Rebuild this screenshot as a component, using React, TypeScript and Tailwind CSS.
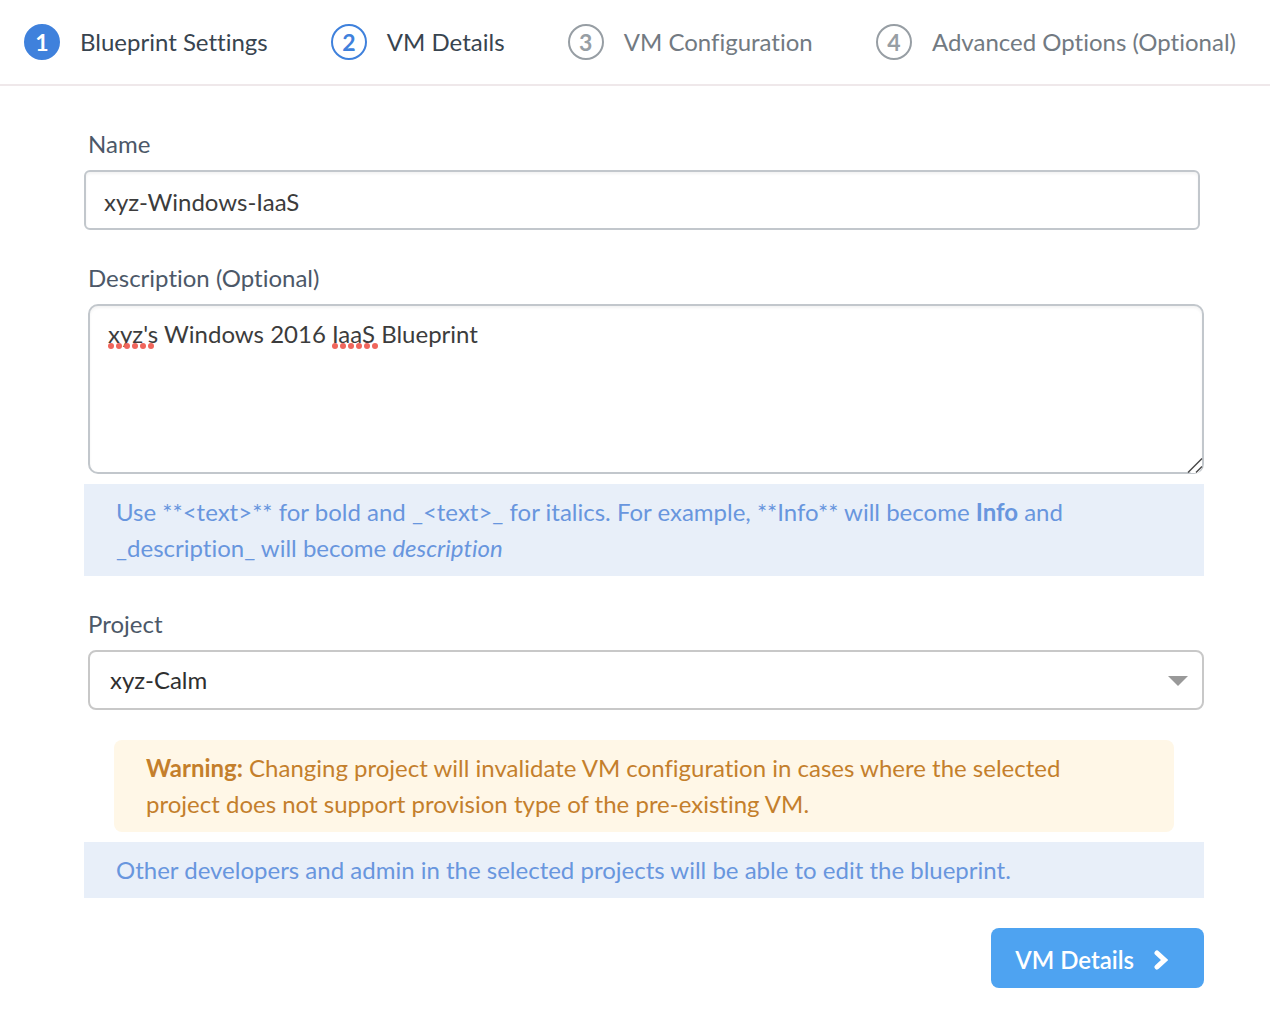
import { useState } from "react";
import type { ReactNode } from "react";

type StepState = "current" | "next" | "upcoming";

const steps: { label: string; state: StepState }[] = [
  { label: "Blueprint Settings", state: "current" },
  { label: "VM Details", state: "next" },
  { label: "VM Configuration", state: "upcoming" },
  { label: "Advanced Options (Optional)", state: "upcoming" },
];

const circleStyles: Record<StepState, string> = {
  current: "border-[#3f81dc] bg-[#3f81dc] text-white",
  next: "border-[#3f81dc] text-[#3f81dc]",
  upcoming: "border-[#979ea4] text-[#979ea4]",
};

const labelStyles: Record<StepState, string> = {
  current: "text-[#38444f]",
  next: "text-[#38444f]",
  upcoming: "text-[#727a82]",
};

function Steps() {
  return (
    <nav aria-label="Blueprint steps" className="border-b-2 border-[#efe8ea] pr-[34px] pl-6">
      <ol className="flex h-[84px] items-center justify-between">
        {steps.map((step, index) => (
          <li key={step.label}>
            <button
              type="button"
              aria-current={step.state === "current" ? "step" : undefined}
              className="flex items-center gap-5 whitespace-nowrap"
            >
              <span
                className={`flex size-9 items-center justify-center rounded-full border-2 text-[23px] leading-none font-bold ${circleStyles[step.state]}`}
              >
                {index + 1}
              </span>
              <span className={labelStyles[step.state]}>{step.label}</span>
            </button>
          </li>
        ))}
      </ol>
    </nav>
  );
}

function FieldLabel({ htmlFor, children }: { htmlFor: string; children: ReactNode }) {
  return (
    <label htmlFor={htmlFor} className="block pb-2 pl-1 text-[#4c5868]">
      {children}
    </label>
  );
}

function SpellingMark() {
  return (
    <svg width="48" height="6" viewBox="0 0 48 6" aria-hidden="true">
      {[3, 11, 19, 27, 35, 43].map((x) => (
        <circle key={x} cx={x} cy="3" r="3" fill="#f0665c" />
      ))}
    </svg>
  );
}

function InfoNote({ children }: { children: ReactNode }) {
  return <p className="bg-[#e8eff9] px-8 py-[10px] text-[#6896de]">{children}</p>;
}

export default function App() {
  const [name, setName] = useState("xyz-Windows-IaaS");
  const initialDescription = "xyz's Windows 2016 IaaS Blueprint";
  const [description, setDescription] = useState(initialDescription);

  return (
    <div className="min-h-screen bg-white font-['Lato',sans-serif] text-2xl leading-9 [font-variant-ligatures:none]">
      <Steps />
      <form className="pt-10 pr-[66px] pb-[42px] pl-[84px]" onSubmit={(e) => e.preventDefault()}>
        <div className="pr-1">
          <FieldLabel htmlFor="name">Name</FieldLabel>
          <input
            id="name"
            type="text"
            value={name}
            onChange={(e) => setName(e.target.value)}
            className="block h-[60px] w-full rounded-md border-2 border-[#c2c7cc] px-[18px] pt-[2px] text-[#3c3c3c] shadow-[inset_0_2px_3px_rgba(0,0,0,0.05)] outline-none"
          />
        </div>

        <div className="pt-[30px]">
          <FieldLabel htmlFor="description">Description (Optional)</FieldLabel>
          <div className="relative ml-1">
            <textarea
              id="description"
              spellCheck={false}
              value={description}
              onChange={(e) => setDescription(e.target.value)}
              className="block h-[170px] w-full resize-none rounded-[10px] border-2 border-[#c2c7cc] px-[18px] py-[10px] text-[#3c3c3c] shadow-[inset_0_2px_3px_rgba(0,0,0,0.05)] outline-none"
            />
            {description === initialDescription && (
              <div className="pointer-events-none absolute top-[39px] left-5 flex gap-[176px]">
                <SpellingMark />
                <SpellingMark />
              </div>
            )}
            <svg
              className="pointer-events-none absolute right-0 bottom-0"
              width="18"
              height="18"
              viewBox="0 0 18 18"
              aria-hidden="true"
            >
              <path d="M4 17 L16 5 V12 L12 17 Z" fill="#fff" />
              <path d="M2 16.5 L16 2.5 M10 16.5 L16 10.5" stroke="#4a4a4a" strokeWidth="1.5" />
            </svg>
          </div>
          <div className="pt-[10px]">
            <InfoNote>
              Use **&lt;text&gt;** for bold and _&lt;text&gt;_ for italics. For example, **Info** will
              become <strong>Info</strong> and
              <br />
              _description_ will become <em>description</em>
            </InfoNote>
          </div>
        </div>

        <div className="pt-[30px]">
          <FieldLabel htmlFor="project">Project</FieldLabel>
          <div className="relative ml-1">
            <select
              id="project"
              className="block h-[60px] w-full appearance-none rounded-lg border-2 border-[#c8c8c8] bg-white px-5 text-[#2f2f2f] outline-none"
            >
              <option>xyz-Calm</option>
            </select>
            <svg
              className="pointer-events-none absolute top-[26px] right-4"
              width="20"
              height="10"
              viewBox="0 0 20 10"
              aria-hidden="true"
            >
              <path d="M0 0 H20 L10 10 Z" fill="#999" />
            </svg>
          </div>
          <p className="mx-[30px] mt-[30px] mb-[10px] rounded-lg bg-[#fff7e7] py-[10px] pr-16 pl-8 text-[#c47f2c]">
            <strong>Warning:</strong> Changing project will invalidate VM configuration in cases where
            the selected project does not support provision type of the pre-existing VM.
          </p>
          <InfoNote>
            Other developers and admin in the selected projects will be able to edit the blueprint.
          </InfoNote>
        </div>

        <div className="flex justify-end pt-[30px]">
          <button
            type="submit"
            className="flex h-[60px] items-center gap-5 rounded-lg bg-[#4ea3f1] pt-1 pr-9 pl-6 font-semibold text-white"
          >
            VM Details
            <svg width="14" height="20" viewBox="0 0 14 20" aria-hidden="true">
              <path
                d="M3 3 L10.5 10 L3 17"
                fill="none"
                stroke="currentColor"
                strokeWidth="5"
                strokeLinecap="round"
              />
            </svg>
          </button>
        </div>
      </form>
    </div>
  );
}
